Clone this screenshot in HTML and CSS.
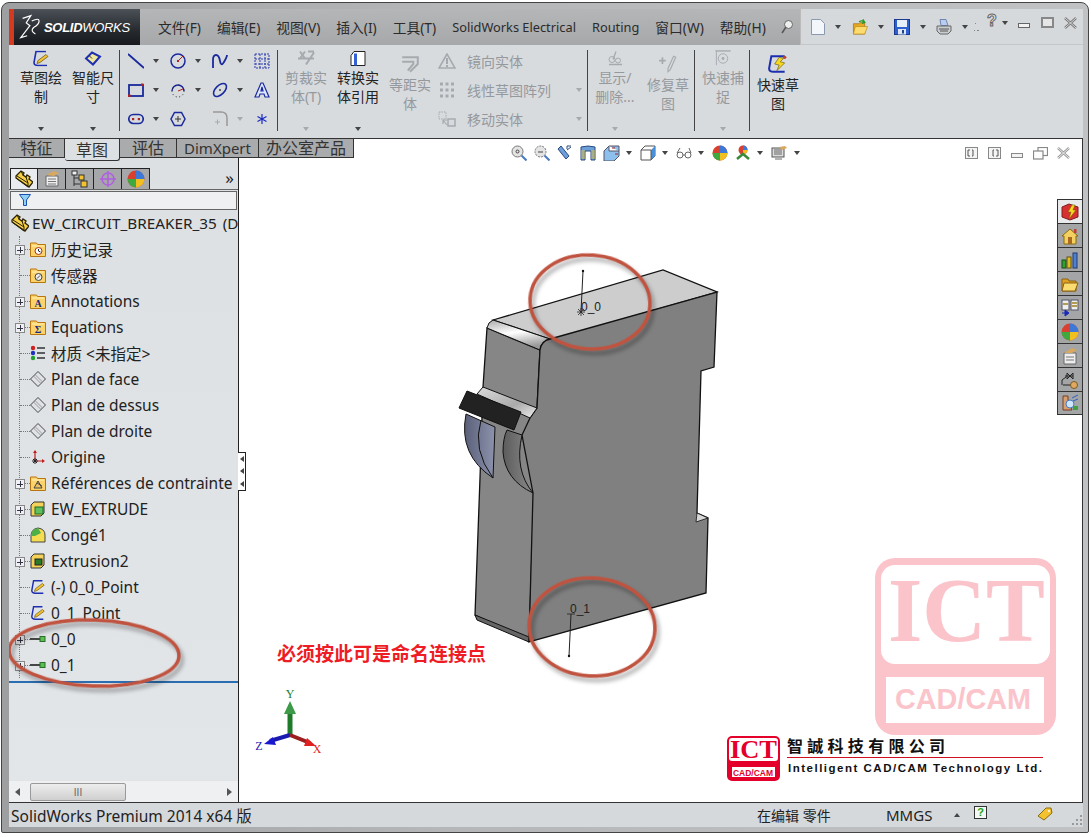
FILE: index.html
```html
<!DOCTYPE html>
<html lang="zh">
<head>
    <meta charset="UTF-8">
    <title>SolidWorks Premium 2014</title>
    <link rel="stylesheet" href="styles.css">
</head>
<body>
    <!-- Iconos reutilizados -->
    <svg class="sprite" xmlns="http://www.w3.org/2000/svg">
        <symbol id="folder" viewBox="0 0 16 16"><path d="M.5 2h6l1 1.500h8v12H.5z" fill="#fbd36a" stroke="#b8760e"/><path d="M2 5h12" stroke="#fff2b8"/></symbol>
        <symbol id="plane" viewBox="0 0 16 16"><path d="M8 .5L15.500 8 8 15.500.5 8z" fill="none" stroke="#444"/><path d="M5 3.500L12.500 11M3.500 5L11 12.500" stroke="#999" fill="none"/></symbol>
        <symbol id="sketch" viewBox="0 0 18 16"><path d="M14 1H4L2 12q0 3 4 3h9" fill="none" stroke="#1d2fb0" stroke-width="1.600"/><path d="M6 10l8-6 2 2-8 6-3 1z" fill="#f2c230" stroke="#5b4a10" stroke-width=".7"/></symbol>
        <symbol id="conn" viewBox="0 0 16 16"><path d="M0 8h10" stroke="#111" stroke-width="1.500"/><rect x="10" y="5.500" width="5" height="5" fill="#58c04e" stroke="#2b6d2a"/></symbol>
        <symbol id="pie" viewBox="0 0 16 16"><circle cx="8" cy="8" r="7.500" fill="#d9402f"/><path d="M8 8V.5A7.500 7.500 0 0 1 15.500 8z" fill="#3c78d8"/><path d="M8 8h7.500A7.500 7.500 0 0 1 8 15.500z" fill="#f0c020"/><path d="M8 8v7.500A7.500 7.500 0 0 1 .5 8z" fill="#3fa83f"/></symbol>
        <symbol id="part" viewBox="0 0 18 18"><path d="M1 6l5-5 3 2-1 2 3 2 1-2 3 2-1 2 4 3-4 5L1 8z" fill="#f5cf45" stroke="#2a2208" stroke-width="1.300"/><path d="M1 8l12 9v-4L2 6M6 1l2 4M11 7l2 6" fill="none" stroke="#2a2208"/></symbol>
    </svg>

    <div class="window">
        <div class="app">
            <!-- Barra superior -->
            <header class="topbar">
                <div class="logo">
                    <svg class="logo-mark" viewBox="0 0 24 28"><path d="M5 4l9-3-5 8 4 3-10 13 7-2M15 7q8-4 8 0t-6 7q-4 4 2 7" fill="none" stroke="#fff" stroke-width="1.300"/></svg>
                    <span class="logo-text"><b>SOLID</b>WORKS</span>
                </div>
                <nav class="menu">
                    <span>文件(F)</span><span>编辑(E)</span><span>视图(V)</span><span>插入(I)</span><span>工具(T)</span><span class="latin">SolidWorks Electrical</span><span class="latin">Routing</span><span>窗口(W)</span><span>帮助(H)</span>
                    <svg class="pin" viewBox="0 0 12 14"><circle cx="7.500" cy="4.500" r="4" fill="#eee" stroke="#666"/><path d="M5 7l-4 6" stroke="#555" stroke-width="1.500"/></svg>
                </nav>
                <div class="quick">
                    <svg class="q-new" viewBox="0 0 14 16"><path d="M.5.5h9l4 4v11H.5z" fill="#f3f6fa" stroke="#8a99ad"/></svg><i class="caret"></i>
                    <svg class="q-open" viewBox="0 0 16 17"><path d="M1 5h6l1-1h5v12H1z" fill="#e8a820" stroke="#9a6a10" stroke-width=".7"/><path d="M3 8h13l-3 8H1z" fill="#fbdc70" stroke="#b8860f" stroke-width=".7"/><path d="M7 3q3-2 5 0M11 .5l2 3-3 1" fill="none" stroke="#2a9a2a" stroke-width="1.500"/></svg><i class="caret"></i>
                    <svg class="q-save" viewBox="0 0 16 16"><rect x=".5" y=".5" width="15" height="15" fill="#2c5fd0" stroke="#173a90"/><rect x="3" y="1" width="10" height="7" fill="#e8eef8"/><rect x="4" y="10" width="8" height="5.500" fill="#dfe6f2"/><rect x="8" y="11" width="2" height="3.500" fill="#1f3f90"/></svg><i class="caret"></i>
                    <svg class="q-print" viewBox="0 0 16 16"><path d="M4 .5h6l2 6H5z" fill="#b9cdf0" stroke="#6f86b0"/><path d="M1 7h14v5l-3 3H4l-3-3z" fill="#c9ccd0" stroke="#666"/><path d="M3 10h10M4 12h8" stroke="#555"/></svg><i class="caret"></i>
                    <svg class="q-dots" viewBox="0 0 6 10"><path d="M1 1h1v1H1zM0 8h1v1H0zM3 8h2v1H3z" fill="#888"/></svg>
                    <span class="q-help">?</span><i class="caret help-caret"></i>
                    <span class="win-min"></span>
                    <span class="win-max"></span>
                    <svg class="win-x" viewBox="0 0 13 12"><path d="M1 1l11 10M12 1L1 11" stroke="#777" stroke-width="2.400"/><path d="M1 1l11 10M12 1L1 11" stroke="#eee" stroke-width=".8"/></svg>
                </div>
            </header>

            <!-- Cinta de comandos -->
            <section class="ribbon">
                <div class="group g-first">
                    <div class="btn">
                        <svg class="bicon" viewBox="0 0 18 16"><use href="#sketch"/></svg>
                        <span class="lbl">草图绘制</span><i class="caret"></i>
                    </div>
                    <div class="btn">
                        <svg class="bicon" viewBox="0 0 18 16"><path d="M2 8l6-6 8 4-7 8z" fill="#f0e6a0" stroke="#1d2fb0" stroke-width="2"/><path d="M5 5l3 3" stroke="#333"/></svg>
                        <span class="lbl">智能尺寸</span><i class="caret"></i>
                    </div>
                </div>
                <div class="sep"></div>
                <div class="tools">
                    <div class="tool"><svg viewBox="0 0 16 16"><path d="M0 1l16 14" stroke="#1a2a9c" stroke-width="1.800"/></svg><i class="caret"></i></div>
                    <div class="tool"><svg viewBox="0 0 16 16"><circle cx="8" cy="8" r="7" fill="none" stroke="#1a2a9c" stroke-width="1.500"/><path d="M8 8l5-5" stroke="#b02020"/><rect x="7" y="7" width="2" height="2" fill="#b02020"/></svg><i class="caret"></i></div>
                    <div class="tool"><svg viewBox="0 0 16 16"><path d="M1 15V7q0-5 3-5t4 6 4 1 3-7" fill="none" stroke="#1a2a9c" stroke-width="1.800"/></svg><i class="caret"></i></div>
                    <div class="tool"><svg viewBox="0 0 16 16"><path d="M1 1h14v14H1zM1 6h14M1 11h14M6 1v14M11 1v14" fill="none" stroke="#2a3ab0" stroke-dasharray="2 1"/></svg></div>
                    <div class="tool"><svg viewBox="0 0 16 16"><rect x="1" y="3" width="14" height="11" fill="none" stroke="#1a2a9c" stroke-width="1.800"/><rect x="13" y="1.500" width="2.500" height="2.500" fill="#b02020"/><rect x="0" y="12.500" width="2.500" height="2.500" fill="#b02020"/></svg><i class="caret"></i></div>
                    <div class="tool"><svg viewBox="0 0 16 16"><path d="M2 9a6 6 0 0 1 12 0" fill="none" stroke="#1a2a9c" stroke-width="1.500"/><circle cx="8" cy="9" r="6" fill="none" stroke="#222" stroke-dasharray="1 2.500"/><path d="M8 9l5-2" stroke="#b02020"/></svg><i class="caret"></i></div>
                    <div class="tool"><svg viewBox="0 0 16 16"><ellipse cx="8" cy="8" rx="8" ry="4.500" transform="rotate(-45 8 8)" fill="none" stroke="#1a2a9c" stroke-width="1.600"/><circle cx="8" cy="8" r="1" fill="#444"/></svg><i class="caret"></i></div>
                    <div class="tool"><svg viewBox="0 0 16 16"><path d="M1 15L7 1h2l6 14h-4l-1-3H6l-1 3zM7 9h2L8 5z" fill="#dfe6ff" stroke="#1a2a9c" stroke-width="1.200"/></svg></div>
                    <div class="tool"><svg viewBox="0 0 16 16"><rect x=".8" y="3.500" width="14.400" height="9" rx="4.500" fill="none" stroke="#1a2a9c" stroke-width="1.700"/><rect x="4" y="7" width="2.200" height="2.200" fill="#b02020"/><rect x="9.800" y="7" width="2.200" height="2.200" fill="#b02020"/></svg><i class="caret"></i></div>
                    <div class="tool"><svg viewBox="0 0 16 16"><path d="M4.500 1.500h7L15 8l-3.500 6.500h-7L1 8z" fill="none" stroke="#1a2a9c" stroke-width="1.500"/><path d="M5 8h6M8 5v6" stroke="#333"/></svg></div>
                    <div class="tool"><svg viewBox="0 0 16 16"><path d="M1 1h8q6 0 6 6v8" fill="none" stroke="#999" stroke-width="1.500"/><path d="M3 11h5M5.500 8.500v5" stroke="#aaa"/></svg><i class="caret off"></i></div>
                    <div class="tool"><svg viewBox="0 0 16 16"><path d="M8 3v10M3.500 5.500l9 5M12.500 5.500l-9 5" stroke="#1a2ac0" stroke-width="1.200"/></svg></div>
                </div>
                <div class="sep"></div>
                <div class="group g-trim">
                    <div class="btn off">
                        <svg class="bicon" viewBox="0 0 18 16"><path d="M3 1l5 7M3 8l5-7M1 8h16M9 14l8-12M11 1h6" fill="none" stroke="#a6aaae" stroke-width="2"/></svg>
                        <span class="lbl">剪裁实体(T)</span><i class="caret off"></i>
                    </div>
                    <div class="btn">
                        <svg class="bicon" viewBox="0 0 18 16"><path d="M2 5l3-4h11v14H2z" fill="#fff" stroke="#222"/><rect x="5" y="3" width="3" height="12" fill="#3460d8"/></svg>
                        <span class="lbl">转换实体引用</span><i class="caret"></i>
                    </div>
                    <div class="btn off tall">
                        <svg class="bicon" viewBox="0 0 18 16"><path d="M2 2h14v6L9 15M2 6h10v2l-5 6" fill="none" stroke="#a6aaae" stroke-width="1.800"/></svg>
                        <span class="lbl">等距实体</span>
                    </div>
                </div>
                <div class="list">
                    <div class="item"><svg viewBox="0 0 18 16"><path d="M9 1L1 15h16z" fill="none" stroke="#a6aaae" stroke-width="1.600"/><path d="M9 5v6M9 12v2" stroke="#a6aaae" stroke-width="2"/></svg><span>镜向实体</span></div>
                    <div class="item"><svg viewBox="0 0 18 16"><path d="M2 2h14M2 8h14M2 14h14" stroke="#a6aaae" stroke-width="3" stroke-dasharray="3 2.500"/></svg><span>线性草图阵列</span><i class="caret off"></i></div>
                    <div class="item"><svg viewBox="0 0 18 16"><rect x="1" y="1" width="7" height="7" fill="none" stroke="#a6aaae" stroke-dasharray="1.500 1"/><rect x="10" y="8" width="7" height="7" fill="none" stroke="#a6aaae" stroke-width="1.500"/><path d="M5 9l4 5M5 13V9h4" fill="none" stroke="#a6aaae" stroke-width="1.200"/></svg><span>移动实体</span><i class="caret off"></i></div>
                </div>
                <div class="sep"></div>
                <div class="group g-show">
                    <div class="btn off">
                        <svg class="bicon" viewBox="0 0 18 16"><path d="M10 1L7 9M3 14h13" stroke="#a6aaae" stroke-width="1.300" fill="none"/><circle cx="6" cy="9" r="3" fill="none" stroke="#a6aaae"/><circle cx="12" cy="10" r="2.500" fill="none" stroke="#a6aaae"/></svg>
                        <span class="lbl">显示/<br>删除...</span><i class="caret off"></i>
                    </div>
                    <div class="btn off tall">
                        <svg class="bicon" viewBox="0 0 18 18"><path d="M1 6h6M4 3v6" stroke="#a6aaae" stroke-width="1.500"/><path d="M14 2l2 1-5 11-2 2v-3z" fill="none" stroke="#a6aaae"/></svg>
                        <span class="lbl">修复草图</span>
                    </div>
                </div>
                <div class="sep"></div>
                <div class="group g-snap">
                    <div class="btn off">
                        <svg class="bicon" viewBox="0 0 18 18"><path d="M1 1h16" stroke="#a6aaae" stroke-width="1.500"/><path d="M2 1v15" stroke="#a6aaae"/><circle cx="9" cy="9" r="5" fill="none" stroke="#a6aaae"/><circle cx="9" cy="9" r="1.500" fill="#a6aaae"/></svg>
                        <span class="lbl">快速捕捉</span><i class="caret off"></i>
                    </div>
                </div>
                <div class="sep"></div>
                <div class="group g-snap">
                    <div class="btn tall">
                        <svg class="bicon" viewBox="0 0 18 18"><path d="M15 2H3L1 13q0 3 4 3h10" fill="none" stroke="#1d2fb0" stroke-width="1.800"/><path d="M10 3l4 1-3 3 4 1-7 7 2-5-4-1z" fill="#f6d820" stroke="#6a5a10" stroke-width=".6"/><circle cx="15" cy="3" r="1.500" fill="#c04030"/></svg>
                        <span class="lbl">快速草图</span>
                    </div>
                </div>
            </section>

            <main class="main">
                <!-- Pestañas sobre el área de trabajo -->
                <div class="tabs">
                    <span class="tab t1">特征</span>
                    <span class="tab t2 active">草图</span>
                    <span class="tab t3">评估</span>
                    <span class="tab t4">DimXpert</span>
                    <span class="tab t5">办公室产品</span>
                </div>

                <aside class="side">
                    <div class="panel-tabs">
                        <span class="ptab active"><svg viewBox="0 0 18 18"><use href="#part"/></svg></span>
                        <span class="ptab"><svg viewBox="0 0 18 18"><path d="M3 6h12v10H3z" fill="#eee" stroke="#666"/><path d="M3 5l8-4 5 2-5 3z" fill="#d9a860"/><path d="M5 9h8M5 11.500h8M5 14h8" stroke="#777"/></svg></span>
                        <span class="ptab"><svg viewBox="0 0 18 18"><path d="M3 3v13M3 8h6M3 14h6" stroke="#333" fill="none"/><rect x="1" y="1" width="5" height="4" fill="#eee" stroke="#333"/><rect x="8" y="5" width="5" height="5" fill="#f2c230" stroke="#333"/><rect x="10" y="11" width="6" height="6" fill="#f2c230" stroke="#333"/></svg></span>
                        <span class="ptab"><svg viewBox="0 0 18 18"><circle cx="9" cy="9" r="6" fill="none" stroke="#b060e0" stroke-width="1.500"/><path d="M9 1v16M1 9h16" stroke="#b060e0" stroke-width="1.500"/></svg></span>
                        <span class="ptab"><svg viewBox="0 0 18 18"><use href="#pie" width="18" height="18"/></svg></span>
                        <span class="more">»</span>
                    </div>
                    <div class="filter">
                        <svg viewBox="0 0 12 12"><path d="M.5.5h11L7.500 6v5.500h-3V6z" fill="#8fd0f5" stroke="#1c4fb0"/></svg>
                    </div>
                    <div class="tree">
                        <div class="root">
                            <svg class="root-ic" viewBox="0 0 18 18"><use href="#part"/></svg>
                            <span>EW_CIRCUIT_BREAKER_35 (D</span>
                        </div>
                        <div class="kids">
                            <div class="row"><i class="exp"></i><i class="twig"></i><svg class="ic"><use href="#folder"/><circle cx="8.500" cy="10" r="3.500" fill="#fff" stroke="#b03020"/><path d="M8.500 8v2l2 1" stroke="#222" fill="none"/></svg><span>历史记录</span></div>
                            <div class="row"><i class="twig"></i><svg class="ic"><use href="#folder"/><circle cx="8.500" cy="10" r="3.500" fill="#eee" stroke="#444"/><path d="M7 11.500l3-3" stroke="#444"/></svg><span>传感器</span></div>
                            <div class="row"><i class="exp"></i><i class="twig"></i><svg class="ic"><use href="#folder"/><text x="8" y="14" class="glyph">A</text></svg><span>Annotations</span></div>
                            <div class="row"><i class="exp"></i><i class="twig"></i><svg class="ic"><use href="#folder"/><text x="8" y="14" class="glyph">Σ</text></svg><span>Equations</span></div>
                            <div class="row"><i class="twig"></i><svg class="ic" viewBox="0 0 16 16"><circle cx="3" cy="3" r="2.200" fill="#d02020"/><circle cx="3" cy="8" r="2.200" fill="#2030c0"/><circle cx="3" cy="13" r="2.200" fill="#20a030"/><path d="M7 3h8M7 8h8M7 13h8" stroke="#333" stroke-width="1.600"/></svg><span>材质 &lt;未指定&gt;</span></div>
                            <div class="row"><i class="twig"></i><svg class="ic"><use href="#plane"/></svg><span>Plan de face</span></div>
                            <div class="row"><i class="twig"></i><svg class="ic"><use href="#plane"/></svg><span>Plan de dessus</span></div>
                            <div class="row"><i class="twig"></i><svg class="ic"><use href="#plane"/></svg><span>Plan de droite</span></div>
                            <div class="row"><i class="twig"></i><svg class="ic" viewBox="0 0 16 16"><path d="M5 12V2M5 12h9" stroke="#c02020" stroke-width="1.200"/><path d="M3 4l2-3 2 3zM12 10l3 2-3 2z" fill="#c02020"/><path d="M2 12h6M5 9v6M3 10l4 4M7 10l-4 4" stroke="#222"/></svg><span>Origine</span></div>
                            <div class="row"><i class="exp"></i><i class="twig"></i><svg class="ic"><use href="#folder"/><path d="M4 13l4-7 4 7zM7 8l5 3" fill="#eec060" stroke="#444"/></svg><span>Références de contrainte</span></div>
                            <div class="row"><i class="exp"></i><i class="twig"></i><svg class="ic" viewBox="0 0 16 16"><path d="M1 4l3-3h10v11l-3 3H1z" fill="#f4d25a" stroke="#333"/><rect x="5" y="6" width="8" height="7" fill="#60c060" stroke="#1f6a20"/></svg><span>EW_EXTRUDE</span></div>
                            <div class="row"><i class="twig"></i><svg class="ic" viewBox="0 0 16 16"><path d="M1 9q0-7 7-8 7 1 7 7v7H1z" fill="#f5dc50" stroke="#444"/><path d="M1 9q0-7 7-8l3 5-6 3z" fill="#4fb048"/></svg><span>Congé1</span></div>
                            <div class="row"><i class="exp"></i><i class="twig"></i><svg class="ic" viewBox="0 0 16 16"><path d="M1 4l3-3h10v11l-3 3H1z" fill="#f4d25a" stroke="#333"/><rect x="5" y="6" width="7" height="6" fill="#2a7a2a" stroke="#222"/></svg><span>Extrusion2</span></div>
                            <div class="row"><i class="twig"></i><svg class="ic"><use href="#sketch"/></svg><span>(-) 0_0_Point</span></div>
                            <div class="row"><i class="twig"></i><svg class="ic"><use href="#sketch"/></svg><span>0_1_Point</span></div>
                            <div class="row"><i class="exp"></i><i class="twig"></i><svg class="ic"><use href="#conn"/></svg><span>0_0</span></div>
                            <div class="row"><i class="exp"></i><i class="twig"></i><svg class="ic"><use href="#conn"/></svg><span>0_1</span></div>
                        </div>
                        <div class="rollback"></div>
                    </div>
                    <div class="hscroll">
                        <i class="arr-l"></i>
                        <span class="thumb">III</span>
                        <i class="arr-r"></i>
                    </div>
                    <svg class="ring" viewBox="0 0 190 90"><ellipse cx="85" cy="41" rx="85" ry="33" transform="rotate(2 85 41)" class="mark"/></svg>
                </aside>

                <div class="handle"><i></i><i></i><i></i></div>

                <section class="view">
                    <!-- Modelo 3D y logotipos en coordenadas de la ventana -->
                    <svg class="scene" viewBox="239 139 844 663">
                        <defs>
                            <linearGradient id="fillet" x1="0" y1="0" x2="0.300" y2="1"><stop offset="0" stop-color="#aaa"/><stop offset=".5" stop-color="#fff"/><stop offset="1" stop-color="#999"/></linearGradient>
                            <linearGradient id="chamfer" x1="0" y1="0" x2="1" y2="1"><stop offset="0" stop-color="#ddd"/><stop offset=".6" stop-color="#aaa"/><stop offset="1" stop-color="#eee"/></linearGradient>
                            <linearGradient id="lever" x1="0" y1="0" x2="1" y2="0"><stop offset="0" stop-color="#5a6078"/><stop offset="1" stop-color="#8d93ad"/></linearGradient>
                            <linearGradient id="disc" x1="0" y1="0" x2="1" y2="0"><stop offset="0" stop-color="#5c5c5c"/><stop offset="1" stop-color="#8a8a8a"/></linearGradient>
                        </defs>
                        <!-- Cara lateral -->
                        <path d="M487 328L540 350 537 408 530 418 534 493 529 641 475 615 480 478 483 387Z" fill="#868686" stroke="#111" stroke-width="1.300"/>
                        <path d="M475 615L529 637V642L477 620Z" fill="#666" stroke="#111"/>
                        <!-- Cara superior y redondeo -->
                        <path d="M493 320L663 270 717 292 557 338 550 339Z" fill="#cdcdcd" stroke="#111" stroke-width="1.300"/>
                        <path d="M493 320L550 339Q541 341 540 350L487 328Q488 322 493 320Z" fill="url(#fillet)" stroke="#111"/>
                        <!-- Cara frontal -->
                        <path d="M550 339L717 292 714 367 701 371 697 513 708 518 706 593 529 642 533 493 522 435 530 418 537 408 540 350Q541 341 550 339Z" fill="#808080" stroke="#111" stroke-width="1.300"/>
                        <path d="M483 387L537 408 530 418 477 394Z" fill="url(#chamfer)" stroke="#111"/>
                        <!-- Palanca -->
                        <path d="M466 414Q458 455 493 478L495 427Z" fill="url(#lever)" stroke="#111"/>
                        <path d="M481 420Q472 450 493 478" fill="none" stroke="#111"/>
                        <path d="M507 430L522 435Q514 470 533 493 505 480 503 452 503 438 507 430Z" fill="url(#disc)" stroke="#111"/>
                        <path d="M467 391L521 412 514 430 459 408Z" fill="#222" stroke="#111"/>
                        <path d="M697 513L708 518 696 522Z" fill="#d8d8d8" stroke="#111" stroke-width=".8"/>

                        <path d="M583 271l-2 41M569 656l2-42" stroke="#222" fill="none"/>
                        <circle cx="583" cy="271" r="1.200" fill="#111"/>
                        <circle cx="569" cy="656" r="1.200" fill="#111"/>
                        <path d="M577 312h8M581 308v8M578 309l6 6M584 309l-6 6" stroke="#222" stroke-width=".8"/>
                        <path d="M567 614h8" stroke="#222" stroke-width=".8"/>
                        <text x="581" y="311" class="pt">0_0</text>
                        <text x="570" y="613" class="pt">0_1</text>
                        <ellipse cx="590" cy="302" rx="60" ry="47" transform="rotate(4 590 302)" class="mark"/>
                        <ellipse cx="592" cy="627" rx="63" ry="49" transform="rotate(3 592 627)" class="mark"/>

                        <text x="277" y="661" class="note">必须按此可是命名连接点</text>

                        <!-- Triada -->
                        <path d="M290 735V712" stroke="#1f7a2a" stroke-width="5"/>
                        <path d="M290 701l6 13h-12z" fill="#3c9a48"/>
                        <path d="M290 735l-20 6" stroke="#1a1ab0" stroke-width="4"/>
                        <path d="M264 744l9-7 3 8z" fill="#1818d0"/>
                        <path d="M290 735l20 8" stroke="#9c1e1e" stroke-width="4"/>
                        <path d="M316 746l-9-8-3 8z" fill="#e02020"/>
                        <text x="290" y="698" class="ax ax-y">Y</text>
                        <text x="259" y="750" class="ax ax-z">Z</text>
                        <text x="317" y="753" class="ax ax-x">X</text>

                        <!-- Marca de agua -->
                        <rect x="875" y="558" width="181" height="177" rx="20" fill="#fbc4cb"/>
                        <rect x="881" y="565" width="169" height="99" rx="14" fill="#fff"/>
                        <rect x="886" y="677" width="158" height="46" fill="#fff"/>
                        <text x="888" y="641" textLength="157" lengthAdjust="spacingAndGlyphs" class="wm-ict">ICT</text>
                        <text x="895" y="709" textLength="136" lengthAdjust="spacingAndGlyphs" class="wm-cad">CAD/CAM</text>

                        <!-- Logotipo pequeño -->
                        <rect x="727" y="736" width="53" height="45" rx="5" fill="#e4002b"/>
                        <rect x="729" y="738" width="49" height="23" rx="3" fill="#fff"/>
                        <rect x="732" y="767" width="43" height="10" fill="#fff"/>
                        <text x="730" y="758" textLength="47" lengthAdjust="spacingAndGlyphs" class="lg-ict">ICT</text>
                        <text x="733" y="775.500" textLength="40" lengthAdjust="spacingAndGlyphs" class="lg-cad">CAD/CAM</text>
                        <text x="787" y="752" textLength="158" class="co-zh">智誠科技有限公司</text>
                        <path d="M787 757.500h256" stroke="#d01020"/>
                        <text x="788" y="772" textLength="254" class="co-en">Intelligent CAD/CAM Technology Ltd.</text>
                    </svg>

                    <div class="hud">
                        <svg viewBox="0 0 16 16"><circle cx="6.500" cy="6.500" r="5.500" fill="#e4e4e4" stroke="#777"/><circle cx="6.500" cy="6.500" r="1.500" fill="none" stroke="#444"/><path d="M10.500 10.500l5 5" stroke="#4a7ac0" stroke-width="2"/></svg>
                        <svg viewBox="0 0 16 16"><circle cx="6.500" cy="6.500" r="5.500" fill="#e4e4e4" stroke="#777" stroke-dasharray="2 1"/><path d="M4 7h5" stroke="#444"/><path d="M10.500 10.500l5 5" stroke="#4a7ac0" stroke-width="2"/></svg>
                        <svg viewBox="0 0 16 16"><path d="M1 4l8 10 3-3L4 1z" fill="#6d9fd8" stroke="#2a4a80"/><path d="M10 5l4-3M10 4V1h4" fill="none" stroke="#2a4a80"/></svg>
                        <svg viewBox="0 0 16 16"><path d="M1 2q7-2 14 0v13h-4V6H5v9H1z" fill="#6d9fd8" stroke="#2a4a80"/><path d="M2 5v9M4 5v9M12 5v9M14 5v9" stroke="#e0c040"/></svg>
                        <svg class="wide" viewBox="0 0 17 16"><path d="M1 6l5-5h10v10l-5 5H1z" fill="#8ec0ee" stroke="#556"/><path d="M6 1v5h10" fill="#fff" stroke="#556"/><path d="M9 3h3M12 9h3" stroke="#b02020"/></svg><i class="caret"></i>
                        <svg viewBox="0 0 16 16"><path d="M1 5l4-4h10v10l-4 4H1z" fill="#fff" stroke="#555"/><path d="M11 5l4-4v10l-4 4z" fill="#4a90d8"/><path d="M1 5h10v10" fill="none" stroke="#555"/></svg><i class="caret"></i>
                        <svg viewBox="0 0 16 16"><circle cx="4" cy="10" r="3" fill="none" stroke="#666"/><circle cx="12" cy="10" r="3" fill="none" stroke="#666"/><path d="M7 10h2M1 8l3-5M15 8l-2-5" stroke="#666" fill="none"/></svg><i class="caret"></i>
                        <svg viewBox="0 0 16 16"><use href="#pie"/></svg>
                        <svg viewBox="0 0 16 16"><circle cx="8" cy="5" r="4.500" fill="#d9402f"/><path d="M8 5V.5A4.500 4.500 0 0 1 12.500 5z" fill="#3c78d8"/><path d="M8 5h4.500A4.500 4.500 0 0 1 8 9.500z" fill="#f0c020"/><path d="M2 14l6-5 6 5" stroke="#3a8a3a" stroke-width="2.500" fill="none"/></svg><i class="caret"></i>
                        <svg class="wide" viewBox="0 0 17 16"><rect x="1" y="3" width="12" height="9" fill="#dcdcdc" stroke="#555"/><path d="M3 5h8M3 7h8M3 9h8M4 14h7" stroke="#666"/><path d="M8 2l6-1 2 2-5 2z" fill="#d9a860"/></svg><i class="caret"></i>
                        <div class="doc-ctl">
                            <svg class="pane" viewBox="0 0 13 12"><rect x=".5" y=".5" width="12" height="11" fill="#f4f4f4" stroke="#888"/><path d="M5 3H3v6h2M7 3h1v6H7" fill="none" stroke="#555"/></svg>
                            <svg class="pane" viewBox="0 0 13 12"><rect x=".5" y=".5" width="12" height="11" fill="#f4f4f4" stroke="#888"/><path d="M6 3h-1v6h1M8 3h2v6H8" fill="none" stroke="#555"/></svg>
                            <span class="win-min d-min"></span>
                            <svg class="d-rest" viewBox="0 0 15 13"><rect x="5" y=".5" width="9.500" height="8" fill="none" stroke="#888" stroke-width="1.200"/><rect x=".5" y="4" width="9.500" height="8" fill="#fff" stroke="#888" stroke-width="1.200"/></svg>
                            <svg class="d-x" viewBox="0 0 13 12"><path d="M1 1l11 10M12 1L1 11" stroke="#999" stroke-width="2.400"/><path d="M1 1l11 10M12 1L1 11" stroke="#fff" stroke-width=".8"/></svg>
                        </div>
                    </div>

                    <div class="tasks">
                        <span class="task first"><svg viewBox="0 0 18 18"><path d="M1 4l7-3 9 3v10l-8 3-8-3z" fill="#d83030" stroke="#802020"/><path d="M11 2L7 9h3l-2 7 7-9h-3l2-5z" fill="#f6d820" stroke="#6a5a10" stroke-width=".5"/></svg></span>
                        <span class="task"><svg viewBox="0 0 18 18"><path d="M1 9l8-7 8 7h-2v8H3V9z" fill="#f3d060" stroke="#8a6a10"/><rect x="7" y="10" width="4" height="7" fill="#a86a20"/><rect x="13" y="2" width="2.500" height="4" fill="#c04030"/></svg></span>
                        <span class="task"><svg viewBox="0 0 18 18"><rect x="1" y="9" width="4" height="8" fill="#30a030" stroke="#145014"/><rect x="6" y="6" width="4" height="11" fill="#e0c020" stroke="#665010"/><rect x="12" y="2" width="4" height="15" fill="#5080d0" stroke="#203a70"/></svg></span>
                        <span class="task"><svg viewBox="0 0 18 18"><path d="M1 4h6l1 2h7v10H1z" fill="#e0a020" stroke="#8a6010"/><path d="M3 8h14l-3 8H1z" fill="#fbdc70" stroke="#8a6010"/></svg></span>
                        <span class="task"><svg viewBox="0 0 18 18"><rect x="1" y="1" width="7" height="10" fill="#eee" stroke="#556"/><rect x="10" y="1" width="7" height="10" fill="#eee" stroke="#556"/><path d="M2 5h5M11 4h5M11 7h5" stroke="#a08020" stroke-width="1.300"/><path d="M1 14h5M4 11l4 3-4 3z" fill="#1a2ab0" stroke="#1a2ab0"/></svg></span>
                        <span class="task"><svg viewBox="0 0 18 18"><use href="#pie" width="18" height="18"/></svg></span>
                        <span class="task"><svg viewBox="0 0 18 18"><path d="M3 6h12v11H3z" fill="#eee" stroke="#666"/><path d="M3 6l8-5 5 2-5 3z" fill="#d9a860"/><path d="M5 10h8M5 13h8" stroke="#777"/></svg></span>
                        <span class="task"><svg viewBox="0 0 18 18"><path d="M1 14V9l4-3M4 5h8M6 2l3 3-3 3zM12 2L9 5l3 3zM2 14h10" stroke="#222" fill="none"/><circle cx="13" cy="14" r="3.500" fill="#e0a860" stroke="#7a5a20"/></svg></span>
                        <span class="task"><svg viewBox="0 0 18 18"><path d="M2 2h5v5l4 9H2z" fill="#d8a070" stroke="#7a3a20"/><circle cx="9" cy="10" r="4" fill="#cfe6fa" stroke="#4a7ac0"/><path d="M11 4l6-3M12 7l5-2" stroke="#3060c0"/><path d="M12 12h5v4h-5z" fill="#40a040"/></svg></span>
                    </div>
                </section>
            </main>

            <footer class="status">
                <span class="st-left">SolidWorks Premium 2014 x64 版</span>
                <span class="st-edit">在编辑 零件</span>
                <span class="st-unit">MMGS</span>
                <i class="st-up"></i>
                <span class="st-help">?</span>
                <svg class="st-tag" viewBox="0 0 16 14"><path d="M1 9l8-8h5l1 5-8 7z" fill="#f2c230" stroke="#8a6a10"/><circle cx="12" cy="4" r="1" fill="#fff"/></svg>
                <svg class="st-grip" viewBox="0 0 11 11"><path d="M9 1h2v2H9zM5 5h2v2H5zM9 5h2v2H9zM1 9h2v2H1zM5 9h2v2H5zM9 9h2v2H9z" fill="#999"/></svg>
            </footer>
        </div>
    </div>
</body>
</html>
```

FILE: styles.css
```css
* {
    box-sizing: border-box;
}

html, body {
    margin: 0;
    height: 837px;
    background: #fff;
    overflow: hidden;
}

body {
    font-family: "Noto Sans", "Noto Sans CJK SC", sans-serif;
    font-size: 14px;
    color: #222;
}

.sprite {
    width: 0;
    height: 0;
    position: absolute;
}

.window {
    width: 1088px;
    height: 831px;
    margin: 2px 0 0 1px;
    padding: 6px 5px 5px 7px;
    border: 1px solid #444;
    border-radius: 8px 8px 2px 2px;
    background: linear-gradient(90deg, #9d9fa1 0, #b4b6b8 40%, #c0c2c4 100%);
}

.app {
    width: 1074px;
    height: 818px;
    display: flex;
    flex-direction: column;
}

.caret {
    display: block;
    width: 0;
    height: 0;
    flex: none;
    border-top: 4px solid #444;
    border-left: 3px solid transparent;
    border-right: 3px solid transparent;
}

.caret.off {
    border-top-color: #a6aaae;
}

/* Barra superior */
.topbar {
    height: 36px;
    display: flex;
    flex: none;
    background: #a8aaac;
}

.logo {
    width: 131px;
    flex: none;
    display: flex;
    align-items: center;
    gap: 4px;
    padding-left: 4px;
    border-left: 5px solid #d33a20;
    background: linear-gradient(180deg, #4b5157 0, #262a2f 60%, #17191d 100%);
    color: #fff;
}

.logo-mark {
    width: 22px;
    height: 27px;
    flex: none;
}

.logo-text {
    font: italic 13px "Liberation Sans", sans-serif;
    letter-spacing: -.3px;
    white-space: nowrap;
}

.logo-text b {
    font-weight: 700;
}

.menu {
    width: 660px;
    flex: none;
    display: flex;
    align-items: center;
    gap: 16px;
    padding-left: 18px;
    background: linear-gradient(180deg, #b4b6b8 0, #a6a8aa 100%);
    color: #2b2b2b;
    font-size: 13.75px;
    white-space: nowrap;
}

.menu .latin {
    font-size: 12.8px;
}

.pin {
    width: 12px;
    height: 14px;
    margin-left: -1px;
}

.quick {
    flex: 1;
    display: flex;
    align-items: center;
    padding-left: 10px;
    background: #d6d9dc;
    border-left: 1px solid #bbb;
    border-bottom: 1px solid #c4c7ca;
}

.quick svg {
    flex: none;
}

.quick .caret {
    margin: 0 10px;
}

.quick .q-new + .caret {
    margin-right: 11px;
}

.q-new {
    width: 14px;
    height: 16px;
}

.q-open,
.q-save,
.q-print {
    width: 16px;
    height: 16px;
}

.q-dots {
    width: 6px;
    height: 10px;
    margin-left: -4px;
}

.q-help {
    width: 9px;
    margin-left: 7px;
    margin-top: -11px;
    font: 700 16px "Liberation Sans", sans-serif;
    color: #eee;
    -webkit-text-stroke: 1px #666;
}

.quick .help-caret {
    margin: -8px 10px 0 6px;
}

.win-min {
    display: block;
    flex: none;
    width: 12px;
    height: 5px;
    border: 1px solid #666;
    background: #f2f2f2;
    margin-top: -2px;
}

.win-max {
    display: block;
    flex: none;
    width: 13px;
    height: 11px;
    margin: -8px 0 0 11px;
    border: 2px solid #888;
    background: #e6e6e6;
}

.win-x {
    width: 13px;
    height: 12px;
    margin: -8px 0 0 10px;
}

/* Cinta */
.ribbon {
    height: 94px;
    flex: none;
    display: flex;
    background: #d8dbde;
    border-bottom: 1px solid #333;
}

.sep {
    width: 1px;
    flex: none;
    margin: 5px 0 7px;
    background: #444;
}

.group {
    display: flex;
}

.g-first {
    margin-left: 6px;
}

.g-trim {
    margin-left: 2px;
}

.g-show {
    margin-left: 1px;
    gap: 1px;
}

.g-snap {
    margin-left: 2px;
}

.btn {
    width: 52px;
    height: 93px;
    display: flex;
    flex-direction: column;
    align-items: center;
    padding: 5px 0 7px;
    text-align: center;
    line-height: 19px;
    font-size: 14px;
    color: #222;
}

.btn.off {
    color: #95999d;
}

.btn .caret {
    margin-top: auto;
}

.bicon {
    width: 18px;
    height: 17px;
    flex: none;
    margin-bottom: 1px;
}

.btn.tall .bicon {
    width: 20px;
    height: 20px;
    margin: 4px 0 1px;
}

.lbl {
    display: block;
}

.tools {
    width: 157px;
    flex: none;
    display: grid;
    grid-template-columns: 42px 42px 42px 31px;
    grid-auto-rows: 29px;
    padding-top: 1px;
}

.tool {
    display: flex;
    align-items: center;
    padding-left: 8px;
}

.tool svg {
    width: 16px;
    height: 16px;
    flex: none;
}

.tool .caret {
    margin-left: 9px;
}

.list {
    width: 151px;
    flex: none;
    padding-top: 1px;
    color: #95999d;
}

.item {
    height: 29px;
    display: flex;
    align-items: center;
    padding-left: 2px;
}

.item svg {
    width: 18px;
    height: 16px;
    flex: none;
    margin-right: 11px;
}

.item .caret {
    margin-left: auto;
    margin-right: 5px;
}

/* Zona principal */
.main {
    position: relative;
    flex: 1;
    display: flex;
    min-height: 0;
}

.tabs {
    position: absolute;
    left: 0;
    top: 0;
    z-index: 3;
    display: flex;
    align-items: flex-start;
}

.tab {
    height: 19px;
    display: flex;
    align-items: center;
    justify-content: center;
    background: #a9abad;
    border: 1px solid #333;
    border-top: none;
    border-left: none;
    font-size: 16px;
    color: #333;
    line-height: 1;
}

.tab.active {
    height: 22px;
    background: #dde0e3;
    border-radius: 0 0 3px 3px;
}

.t1 { width: 56px; }
.t2 { width: 55px; }
.t3 { width: 57px; }
.t4 { width: 82px; font-size: 15px; }
.t5 { width: 95px; }

.side {
    position: relative;
    width: 230px;
    flex: none;
    display: flex;
    flex-direction: column;
    overflow: hidden;
    padding-top: 29px;
    border-right: 1px solid #222;
    background: linear-gradient(180deg, #dde0e3 0, #e3e6e9 100%);
}

.panel-tabs {
    height: 22px;
    flex: none;
    display: flex;
    padding-left: 1px;
    border-bottom: 1px solid #666;
}

.ptab {
    width: 28px;
    display: flex;
    align-items: center;
    justify-content: center;
    background: #a5a7a9;
    border: 1px solid #222;
    border-bottom: none;
    border-left: none;
}

.ptab.active {
    background: #e9ebee;
    border-left: 1px solid #222;
}

.ptab svg {
    width: 18px;
    height: 18px;
}

.more {
    margin-left: auto;
    margin-right: 4px;
    font-size: 17px;
    line-height: 20px;
}

.filter {
    height: 19px;
    flex: none;
    margin: 1px 1px 0;
    padding: 2px 0 0 8px;
    background: #eef0f2;
    border: 1px solid #666;
}

.filter svg {
    display: block;
    width: 12px;
    height: 12px;
}

.tree {
    flex: 1;
    min-height: 0;
    white-space: nowrap;
    font-size: 15.5px;
}

.root {
    height: 26px;
    display: flex;
    align-items: center;
    padding-left: 2px;
    gap: 3px;
    font-size: 15.3px;
    word-spacing: 2px;
}

.root-ic {
    width: 18px;
    height: 18px;
    flex: none;
}

.kids {
    margin-left: 10px;
    border-left: 1px dotted #777;
}

.row {
    position: relative;
    height: 26px;
    display: flex;
    align-items: center;
}

.twig {
    display: block;
    width: 10px;
    border-top: 1px dotted #777;
}

.exp {
    position: absolute;
    left: -5px;
    top: 9px;
    width: 10px;
    height: 10px;
    border: 1px solid #888;
    background:
        linear-gradient(#334, #334) center / 6px 1px no-repeat,
        linear-gradient(#334, #334) center / 1px 6px no-repeat,
        #eef0f3;
}

.ic {
    width: 16px;
    height: 16px;
    flex: none;
    margin-right: 5px;
}

.glyph {
    font: 700 10px "Liberation Serif", serif;
    fill: #1c2a80;
    text-anchor: middle;
}

.rollback {
    height: 2px;
    margin-top: 3px;
    background: #2a6db0;
}

.hscroll {
    height: 22px;
    flex: none;
    display: flex;
    align-items: center;
    padding: 0 6px;
    background: #eff0f1;
    border-top: 1px solid #e2e3e4;
}

.arr-l,
.arr-r {
    display: block;
    border-top: 4px solid transparent;
    border-bottom: 4px solid transparent;
}

.arr-l {
    border-right: 5px solid #555;
}

.arr-r {
    margin-left: auto;
    border-left: 5px solid #555;
}

.thumb {
    width: 96px;
    height: 18px;
    margin-left: 10px;
    text-align: center;
    font: 10px/17px "Liberation Sans", sans-serif;
    color: #666;
    border: 1px solid #9a9a9a;
    border-radius: 2px;
    background: linear-gradient(180deg, #ededed 0, #cfcfcf 100%);
}

.ring {
    position: absolute;
    left: 0;
    top: 473px;
    width: 190px;
    height: 90px;
}

.mark {
    fill: none;
    stroke: #c0533f;
    stroke-width: 3.500;
    filter: drop-shadow(3px 4px 2px rgba(0, 0, 0, .35));
}

.handle {
    position: absolute;
    left: 229px;
    top: 313px;
    z-index: 2;
    width: 8px;
    height: 39px;
    display: flex;
    flex-direction: column;
    justify-content: space-around;
    align-items: center;
    background: #fff;
    border: 1px solid #222;
    border-left: none;
}

.handle i {
    display: block;
    border-top: 3px solid transparent;
    border-bottom: 3px solid transparent;
    border-right: 4px solid #444;
}

/* Vista gráfica */
.view {
    position: relative;
    flex: 1;
    min-width: 0;
    background: #fff;
    border-right: 1px solid #333;
}

.scene {
    position: absolute;
    left: 0;
    top: 0;
    width: 844px;
    height: 663px;
}

.pt {
    font: 12px "Liberation Sans", sans-serif;
    fill: #222;
}

.note {
    font: 700 19px "Noto Sans CJK SC", sans-serif;
    fill: #ee1c25;
}

.ax {
    font: 12px "Liberation Serif", serif;
    text-anchor: middle;
}

.ax-y { fill: #1f7a2a; }
.ax-z { fill: #1a1ab0; }
.ax-x { fill: #e02020; }

.wm-ict {
    font: 700 91px "Liberation Serif", serif;
    fill: #fbc4cb;
}

.wm-cad {
    font: 700 30px "Liberation Sans", sans-serif;
    fill: #fbc4cb;
}

.lg-ict {
    font: 700 26px "Liberation Serif", serif;
    fill: #e4002b;
}

.lg-cad {
    font: 700 9px "Liberation Sans", sans-serif;
    fill: #e4002b;
}

.co-zh {
    font: 700 16px "Noto Sans CJK TC", sans-serif;
    fill: #111;
}

.co-en {
    font: 700 11.500px "Liberation Sans", sans-serif;
    fill: #111;
}

.hud {
    position: relative;
    height: 28px;
    display: flex;
    align-items: center;
    padding: 0 12px 0 272px;
}

.hud > svg {
    width: 16px;
    height: 16px;
    flex: none;
    margin-right: 7px;
}

.hud > svg.wide {
    width: 17px;
}

.hud > .caret {
    margin: 0 8px 0 -1px;
}

.doc-ctl {
    margin-left: auto;
    display: flex;
    align-items: center;
}

.pane {
    display: block;
    width: 13px;
    height: 12px;
    margin-right: 10px;
}

.d-min {
    margin: 4px 10px 0 0;
    border-color: #888;
}

.d-rest {
    width: 15px;
    height: 13px;
    margin-right: 9px;
}

.d-x {
    width: 13px;
    height: 12px;
}

.tasks {
    position: absolute;
    right: 0;
    top: 60px;
    display: flex;
    flex-direction: column;
}

.task {
    width: 25px;
    height: 24px;
    display: flex;
    align-items: center;
    justify-content: center;
    background: #a3a5a7;
    border: 1px solid #333;
    border-bottom: none;
    border-right: none;
}

.task:last-child {
    border-bottom: 1px solid #333;
}

.task.first {
    background: #e9eaeb;
}

.task svg {
    width: 18px;
    height: 18px;
}

/* Barra de estado */
.status {
    height: 25px;
    flex: none;
    display: flex;
    align-items: center;
    background: #d6d9dc;
    border-top: 1px solid #333;
    padding-left: 2px;
    font-size: 15.5px;
    white-space: nowrap;
}

.st-left {
    width: 746px;
}

.st-edit {
    width: 129px;
    font-size: 14px;
}

.st-unit {
    width: 68px;
    font-size: 15px;
}

.st-up {
    display: block;
    width: 0;
    height: 0;
    border-bottom: 4px solid #444;
    border-left: 3px solid transparent;
    border-right: 3px solid transparent;
}

.st-help {
    width: 13px;
    height: 13px;
    margin: -5px 0 0 14px;
    border: 1px solid #333;
    background: #f4f8f4;
    color: #18a018;
    font: 700 11px/11px "Liberation Sans", sans-serif;
    text-align: center;
}

.st-tag {
    width: 16px;
    height: 14px;
    margin: -3px 0 0 50px;
}

.st-grip {
    width: 11px;
    height: 11px;
    margin: 8px 0 0 18px;
}
```
